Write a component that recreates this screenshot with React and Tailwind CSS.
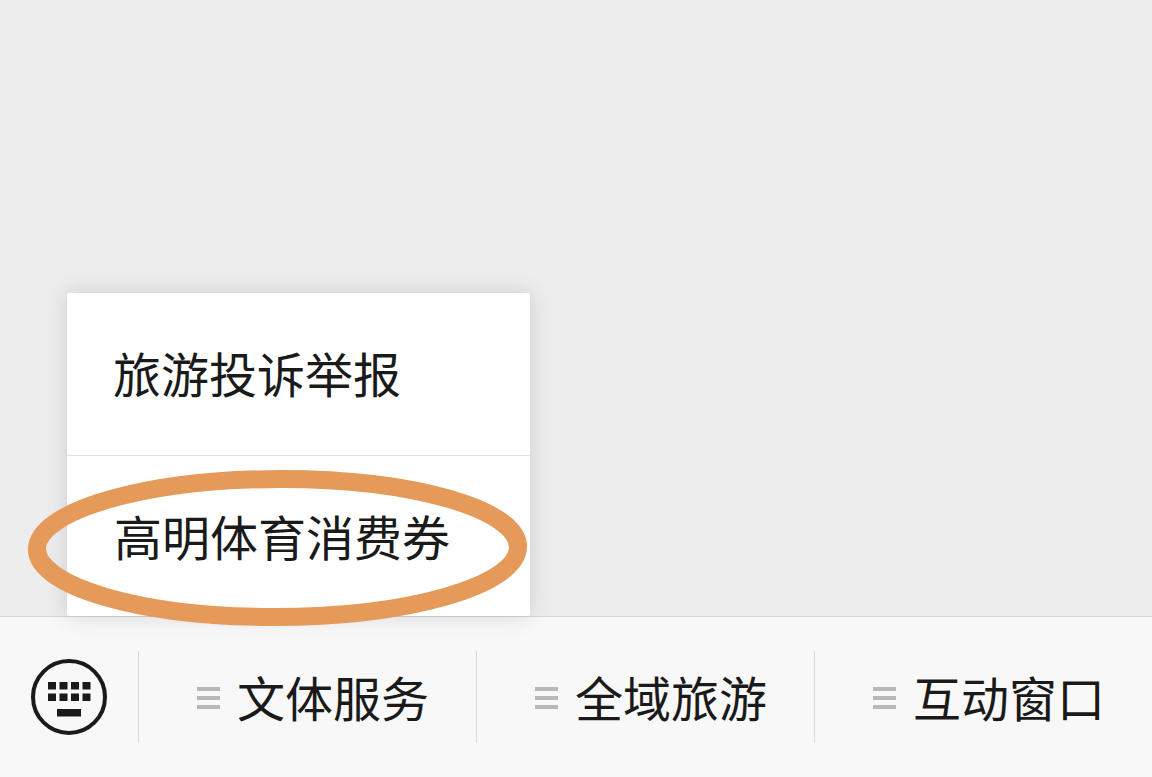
import React from 'react';

const KEY_COLS = [48, 59.5, 71, 82.5];

const KeyboardIcon = () => (
    <svg className="w-[80px] h-[80px]" viewBox="0 0 80 80">
        <circle cx="40" cy="40" r="36" fill="none" stroke="#1a1a1a" strokeWidth="4" />
        {KEY_COLS.map(x => (
            <React.Fragment key={x}>
                <rect x={x - 29} y="25" width="8" height="7.5" fill="#1a1a1a" />
                <rect x={x - 29} y="36.5" width="8" height="7.5" fill="#1a1a1a" />
            </React.Fragment>
        ))}
        <rect x="28" y="52" width="24" height="7.5" fill="#1a1a1a" />
    </svg>
);

const MenuIcon = () => (
    <div className="flex flex-col gap-[5px] w-[23px] mt-[2px] mr-[17px]">
        <span className="block h-[4px] bg-[#b8b8b8]" />
        <span className="block h-[4px] bg-[#b8b8b8]" />
        <span className="block h-[4px] bg-[#b8b8b8]" />
    </div>
);

const TABS = ['文体服务', '全域旅游', '互动窗口'];

export default function App() {
    return (
        <div className="relative flex flex-col w-[1152px] h-[777px] overflow-hidden bg-[#ededed] text-[#1a1a1a] font-['Noto_Sans_CJK_SC','Noto_Sans',sans-serif]">
            <div className="flex-1" />

            {/* Bottom bar */}
            <div className="flex items-start h-[161px] pt-[34px] bg-[#f8f8f8] border-t border-[#d6d6d6]">
                <div className="flex items-center justify-center w-[138px] h-[92px]">
                    <KeyboardIcon />
                </div>
                {TABS.map(tab => (
                    <div key={tab} className="flex items-center justify-center w-[338px] h-[92px] pl-[11px] border-l border-[#d9d9d9]">
                        <MenuIcon />
                        <span className="mb-[2px] text-[48px] leading-[64px]">{tab}</span>
                    </div>
                ))}
            </div>

            {/* Popup menu */}
            <div className="absolute left-[67px] top-[293px] w-[463px] h-[323px] bg-white rounded-[2px] shadow-[0_0_22px_rgba(0,0,0,0.14)]">
                <div className="flex items-center h-[163px] pl-[46px] pb-[4px] border-b border-[#e4e4e4] text-[48px] leading-[64px]">
                    旅游投诉举报
                </div>
                <div className="flex items-center h-[160px] pl-[47px] pb-[2px] text-[48px] leading-[64px]">
                    高明体育消费券
                </div>
            </div>

            {/* Hand-drawn highlight */}
            <svg className="absolute left-[20px] top-[460px] w-[520px] h-[176px]" viewBox="0 0 520 176">
                <ellipse cx="257.5" cy="88" rx="240.5" ry="69" fill="none" stroke="#e59a5a" strokeWidth="18" transform="translate(257.5 88) skewX(-3) translate(-257.5 -88)" />
            </svg>
        </div>
    );
}
